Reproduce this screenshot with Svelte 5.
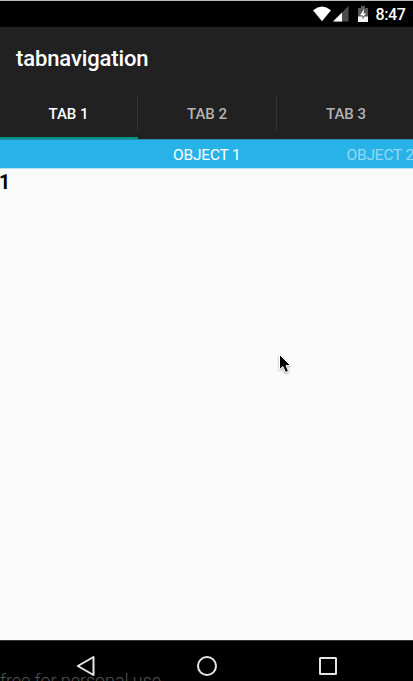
<script>
  const tabs = ['TAB 1', 'TAB 2', 'TAB 3'];
  let active = $state(0);
</script>

<div class="screen">
  <div class="status">
    <svg class="wifi" width="20" height="16" viewBox="0 0 20 16"><path d="M1 4.2Q10-3.2 19 4.2L10 15.2Z" fill="#fff" /></svg>
    <svg class="signal" width="16" height="16" viewBox="0 0 16 16">
      <path d="M0 15.5 15.5 0V15.5Z" fill="#4d4d4d" /><path d="M0 15.5 9 6.5V15.5Z" fill="#fff" />
    </svg>
    <svg class="battery" width="10" height="16" viewBox="0 0 10 16">
      <path d="M0 2H3V0H7V2H10V11H0Z" fill="#5a5a5a" />
      <path d="M0 10.5H10V16H0Z" fill="#f4f4f4" />
      <path d="M6 3 2 9.2H4.7V10.5H5.2L8.2 7.4H5.6Z" fill="#fff" />
      <path d="M4.6 10.5H6.4L4.6 13Z" fill="#333" />
    </svg>
    <span class="clock">8:47</span>
  </div>

  <header><h1>tabnavigation</h1></header>

  <nav class="tabs">
    {#each tabs as tab, i}
      <button class:active={active === i} onclick={() => (active = i)}>{tab}</button>
    {/each}
  </nav>

  <div class="strip">
    <span class="current">OBJECT 1</span>
    <span class="next">OBJECT 2</span>
  </div>

  <main>
    <b>1</b>
    <svg class="cursor" width="16" height="24" viewBox="0 0 16 24">
      <path d="M1.5 1.5V16.6L5 13.6 7.5 19.4 10.5 18.2 8 12.6H12.6Z" fill="#000" stroke="#fff" stroke-width="1" />
    </svg>
  </main>

  <footer>
    <svg width="20" height="22" viewBox="0 0 20 22"><path d="M17.5 2V20L1.8 11Z" /></svg>
    <svg width="22" height="22" viewBox="0 0 22 22"><circle cx="11" cy="11" r="9" /></svg>
    <svg width="20" height="22" viewBox="0 0 20 22"><rect x="2" y="3" width="16" height="16" rx=".5" /></svg>
    <span class="watermark">free for personal use</span>
  </footer>
</div>

<style>
  :global(body) { background: #000; overflow: hidden; }
  .screen {
    box-sizing: border-box;
    width: 413px;
    height: 681px;
    overflow: hidden;
    display: flex;
    flex-direction: column;
    border-top: 1px solid #b9bcbb;
    font-family: Roboto, sans-serif;
    background: #000;
  }
  .status {
    height: 26px;
    flex: none;
    display: flex;
    align-items: flex-start;
    padding: 5px 0 0 312px;
    box-sizing: border-box;
  }
  .signal { margin-left: 1px; }
  .battery { margin-left: 9px; }
  .clock {
    margin-left: 7.5px;
    color: #fff;
    font-size: 16px;
    font-weight: 500;
    letter-spacing: -.4px;
    line-height: 18px;
    white-space: nowrap;
  }
  header {
    height: 63px;
    flex: none;
    display: flex;
    align-items: center;
    padding-left: 16px;
    background: #212121;
  }
  h1 {
    margin: 0;
    color: #fff;
    font-size: 22px;
    font-weight: 500;
    letter-spacing: -.12px;
    line-height: 30px;
  }
  .tabs {
    height: 49px;
    flex: none;
    display: grid;
    grid-template-columns: 138px 139px 136px;
    background: #212121;
  }
  button {
    position: relative;
    margin: 0;
    padding: 0 1px 1px 0;
    border: 0;
    background: none;
    color: #b3b3b3;
    font: 500 15px/20px Roboto, sans-serif;
  }
  button:last-child { padding: 0 0 1px 2px; }
  button.active { color: #fff; box-shadow: inset 0 -2px #009580; }
  button:not(:last-child)::after {
    content: '';
    position: absolute;
    top: 6px;
    right: 0;
    width: 1px;
    height: 35px;
    background: #363636;
  }
  .strip {
    height: 30px;
    flex: none;
    box-sizing: border-box;
    display: flex;
    padding-left: 173px;
    background: #28b3e8;
    border-top: 1px solid #248db4;
    border-bottom: 1px solid #b6e1f3;
    color: #fff;
    font-size: 15.5px;
    letter-spacing: -.2px;
    line-height: 30px;
    white-space: nowrap;
  }
  .current { width: 173.5px; flex: none; }
  .next { color: #94d9f3; }
  main { position: relative; flex: 1; background: #fafafa; }
  b { display: block; font-size: 19.5px; line-height: 28px; font-weight: 700; color: #000; margin-left: -1px; }
  .cursor { position: absolute; left: 278px; top: 184px; filter: drop-shadow(0 1px 1px #0005); }
  footer {
    position: relative;
    box-sizing: border-box;
    height: 41px;
    flex: none;
    display: flex;
    gap: 100px;
    padding: 14px 0 0 75.6px;
    border-top: 1px solid #353535;
    overflow: hidden;
  }
  footer svg { flex: none; fill: none; stroke: #e6e6e6; stroke-width: 2; stroke-linejoin: round; }
  .watermark {
    position: absolute;
    left: 0;
    top: 29px;
    color: #555;
    font-size: 18px;
    font-weight: 300;
    letter-spacing: -.06px;
    line-height: 22px;
    white-space: nowrap;
  }
</style>
